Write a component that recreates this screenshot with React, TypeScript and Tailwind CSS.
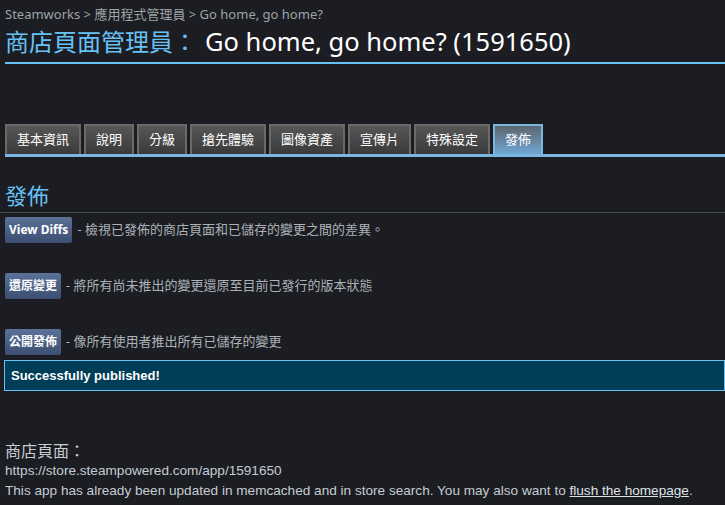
import React from "react";

const tabs = ["基本資訊", "說明", "分級", "搶先體驗", "圖像資產", "宣傳片", "特殊設定", "發佈"];

const cjk = "font-['Noto_Sans','Noto_Sans_CJK_TC',sans-serif]";
const latin = "font-['Liberation_Sans','Noto_Sans_CJK_TC',sans-serif]";

function ActionRow({ label, desc }: { label: string; desc: string }) {
  return (
    <div className="flex items-center gap-[5px]">
      <button className="h-[26px] rounded-[2px] bg-gradient-to-b from-[#5b7197] to-[#3c4f72] px-[4px] text-[12px] font-bold text-white">
        {label}
      </button>
      <span className="text-[13px] text-[#acb2b8]">- {desc}</span>
    </div>
  );
}

export default function App() {
  return (
    <div className={`min-h-[505px] w-[725px] overflow-hidden bg-[#1b1d22] ${cjk}`}>
      {/* Header */}
      <div className="pl-[5px] pt-[5px]">
        <div className="text-[13px] leading-[18px] text-[#9ea3a8]">
          Steamworks &gt; 應用程式管理員 &gt; Go home, go home?
        </div>
        <h1 className="mt-[2px] text-[24px] leading-[32px]">
          <span className="text-[#67c1f5]">商店頁面管理員：</span>
          <span className="ml-[8px] text-[25.5px] text-white">Go home, go home? (1591650)</span>
        </h1>
      </div>
      <div className="ml-[5px] mt-[4px] h-[2px] bg-[#67c1f5]" />

      {/* Tabs */}
      <div className="mt-[60px] pl-[5px]">
        <div className="flex gap-[3px]">
          {tabs.map((t) => {
            const active = t === "發佈";
            return (
              <div
                key={t}
                className={`flex h-[30px] items-center border-2 border-b-0 px-[10px] text-[13px] text-white ${
                  active
                    ? "border-[#7ab6e0] bg-gradient-to-b from-[#5d6670] to-[#6fa6d4]"
                    : "border-[#6a6a6a] bg-gradient-to-b from-[#575757] to-[#3a3a3a]"
                }`}
              >
                {t}
              </div>
            );
          })}
        </div>
        <div className="h-[3px] bg-[#7ab6e0]" />
      </div>

      {/* Section */}
      <h2 className="mt-[23px] pl-[5px] text-[22px] leading-[30px] text-[#67c1f5]">發佈</h2>
      <div className="mt-[2px] h-px bg-[#4a4d52]" />

      <div className="flex flex-col gap-[30px] pl-[5px] pt-[4px]">
        <ActionRow label="View Diffs" desc="檢視已發佈的商店頁面和已儲存的變更之間的差異。" />
        <ActionRow label="還原變更" desc="將所有尚未推出的變更還原至目前已發行的版本狀態" />
        <ActionRow label="公開發佈" desc="像所有使用者推出所有已儲存的變更" />
      </div>

      <div className={`ml-[4px] mt-[5px] flex h-[31px] items-center border border-[#67c1f5] bg-[#003d56] pl-[6px] text-[13px] font-bold text-white ${latin}`}>
        Successfully published!
      </div>

      <div className="mt-[50px] pl-[5px]">
        <div className="text-[16px] leading-[20px] text-[#c6ccd2]">商店頁面：</div>
        <div className={`text-[13.6px] leading-[20px] text-[#c6ccd2] ${latin}`}>
          <div>https://store.steampowered.com/app/1591650</div>
          <div>
            This app has already been updated in memcached and in store search. You may also want to{" "}
            <span className="text-[#dfe3e6] underline">flush the homepage</span>.
          </div>
        </div>
      </div>
    </div>
  );
}
